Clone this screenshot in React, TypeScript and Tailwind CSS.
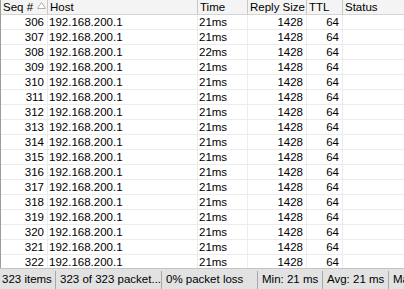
import React from "react";

const cols = "grid-cols-[47px_150px_50px_59px_36px_1fr]";

const rows = Array.from({ length: 18 }, (_, i) => ({
  seq: 306 + i,
  time: i === 2 ? "22ms" : "21ms",
}));

export default function App() {
  return (
    <div
      className="w-[404px] h-[289px] flex flex-col bg-white overflow-hidden text-[11.5px] text-black"
      style={{ fontFamily: '"Liberation Sans", Arial, sans-serif' }}
    >
      <div className="flex-1 overflow-hidden border-l border-[#9c9c9c]">
        <div className={`grid ${cols} h-[15px] bg-[#f4f4f4] border-b border-[#d5d5d5] leading-[14px]`}>
          <div className="border-r border-[#c8c8c8] pl-[2px] flex items-center whitespace-nowrap">
            <span>Seq #</span>
            <svg width="9" height="7" viewBox="0 0 9 7" className="ml-[4px] mt-[-3px] shrink-0">
              <path d="M4.5 0.5 L8.5 6.5 L0.5 6.5 Z" fill="#fff" stroke="#b0b0b0" />
            </svg>
          </div>
          <div className="border-r border-[#c8c8c8] pl-[2px]">Host</div>
          <div className="border-r border-[#c8c8c8] pl-[2px]">Time</div>
          <div className="border-r border-[#c8c8c8] pl-[2px] whitespace-nowrap">Reply Size</div>
          <div className="border-r border-[#c8c8c8] pl-[2px]">TTL</div>
          <div className="pl-[2px]">Status</div>
        </div>
        {rows.map((r) => (
          <div key={r.seq} className={`grid ${cols} h-[15px] border-b border-[#ececec] leading-[14px]`}>
            <div className="border-r border-[#ececec] text-right pr-[3px]">{r.seq}</div>
            <div className="border-r border-[#ececec] pl-[1px]">192.168.200.1</div>
            <div className="border-r border-[#ececec] pl-[1px]">{r.time}</div>
            <div className="border-r border-[#ececec] text-right pr-[3px]">1428</div>
            <div className="border-r border-[#ececec] text-right pr-[3px]">64</div>
            <div></div>
          </div>
        ))}
      </div>
      <div className="h-[21px] shrink-0 bg-[#e2e2e2] border-t border-[#c4c4c4] flex items-stretch gap-[2px] pt-[2px] whitespace-nowrap overflow-hidden">
        <div className="w-[56px] shrink-0 overflow-hidden border-r border-[#a8a8a8] pl-[2px] flex items-center">323 items</div>
        <div className="w-[104px] shrink-0 overflow-hidden border-r border-[#a8a8a8] pl-[2px] flex items-center">323 of 323 packet...</div>
        <div className="w-[94px] shrink-0 overflow-hidden border-r border-[#a8a8a8] pl-[2px] flex items-center">0% packet loss</div>
        <div className="w-[63px] shrink-0 overflow-hidden border-r border-[#a8a8a8] pl-[2px] flex items-center">Min: 21 ms</div>
        <div className="w-[64px] shrink-0 overflow-hidden border-r border-[#a8a8a8] pl-[2px] flex items-center">Avg: 21 ms</div>
        <div className="shrink-0 pl-[2px] flex items-center">Max: 22 ms</div>
      </div>
    </div>
  );
}
